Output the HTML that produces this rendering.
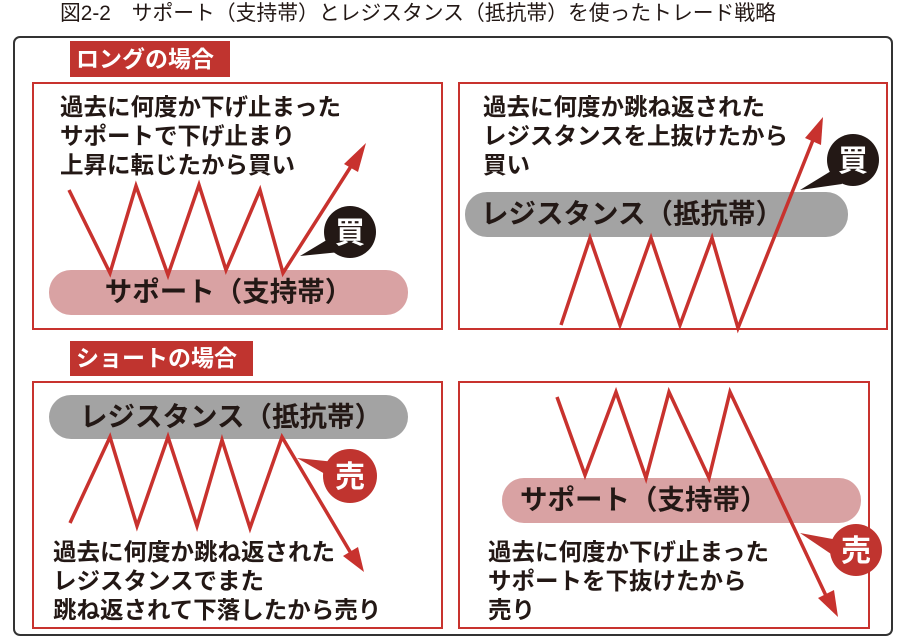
<!DOCTYPE html>
<html><head><meta charset="utf-8"><style>
body{margin:0;width:906px;height:643px;background:#fff;position:relative;overflow:hidden;font-family:"Liberation Sans","Noto Sans CJK JP",sans-serif;color:#231815}
.a{position:absolute}
.t{font-weight:bold;font-size:23.5px;line-height:29px;white-space:nowrap;letter-spacing:0px}
.lab{background:#c0342f;color:#fff;font-weight:bold;font-size:23px;line-height:36px;padding-left:6px;white-space:nowrap}
.p{border:2px solid #c8322e;box-sizing:border-box}
.pill{border-radius:22px;font-weight:bold;font-size:27.5px;line-height:44px;white-space:nowrap}
</style></head><body>
<div class="a" style="left:60px;top:1px;font-size:20.8px;line-height:26px;white-space:nowrap">図2-2　サポート（支持帯）とレジスタンス（抵抗帯）を使ったトレード戦略</div>
<div class="a" style="left:13px;top:36px;width:880px;height:600px;border:2px solid #333;border-radius:7px;box-sizing:border-box"></div>
<div class="a lab" style="left:70px;top:41px;width:154px;height:36px">ロングの場合</div>
<div class="a lab" style="left:70px;top:341px;width:177px;height:35px;line-height:35px">ショートの場合</div>
<div class="a p" style="left:32px;top:82px;width:411px;height:248px"></div>
<div class="a p" style="left:458px;top:82px;width:430px;height:248px"></div>
<div class="a p" style="left:32px;top:381px;width:411px;height:248px"></div>
<div class="a p" style="left:458px;top:381px;width:412px;height:248px"></div>
<div class="a pill" style="left:49px;top:270px;width:359px;height:45px;background:#d9a2a3;text-align:center">サポート（支持帯）</div>
<div class="a pill" style="left:465px;top:192px;width:383px;height:45px;background:#a3a3a3;padding-left:16px;box-sizing:border-box">レジスタンス（抵抗帯）</div>
<div class="a pill" style="left:49px;top:395px;width:359px;height:44px;background:#a3a3a3;padding-left:31px;box-sizing:border-box">レジスタンス（抵抗帯）</div>
<div class="a pill" style="left:502px;top:478px;width:359px;height:45px;background:#d9a2a3;padding-left:18px;box-sizing:border-box">サポート（支持帯）</div>
<svg class="a" style="left:0;top:0" width="906" height="643">
<g fill="none" stroke="#c8322e" stroke-width="3.5" stroke-linejoin="miter">
<polyline points="69,190 110,273 136,186 168,275 199,185 226,270 260,190 283,273 355,160"/>
<polyline points="561,325 590,238 620,325 651,238 680,325 712,238 738,328 815,135"/>
<polyline points="70,523 110,437 137,526 168,437 197,526 222,440 250,528 282,437 352,555"/>
<polyline points="557,397 585,475 616,392 646,478 669,392 709,478 730,392 828,600"/>
</g>
<g fill="#c8322e">
<polygon points="366,143 344,164 358,172"/>
<polygon points="823,117 805,138 821,145"/>
<polygon points="364,572 343,556 358,547"/>
<polygon points="838,617 818,598 834,590"/>
</g>
<polygon points="300,256 335,235 340,252" fill="#231815"/>
<circle cx="350" cy="232" r="26" fill="#231815"/>
<polygon points="800,190 836,168 842,184" fill="#231815"/>
<circle cx="853" cy="160" r="26" fill="#231815"/>
<polygon points="297,458 335,462 332,478" fill="#c0342f"/>
<circle cx="350" cy="476" r="27" fill="#c0342f"/>
<polygon points="800,533 838,540 834,556" fill="#c0342f"/>
<circle cx="856" cy="550" r="26" fill="#c0342f"/>
<g font-family="Liberation Sans,Noto Sans CJK JP,sans-serif" font-weight="bold" font-size="30" fill="#fff" text-anchor="middle">
<text x="350" y="243">買</text><text x="853" y="171">買</text><text x="350" y="487">売</text><text x="856" y="561">売</text>
</g>
</svg>
<div class="a t" style="left:60px;top:93px">過去に何度か下げ止まった<br>サポートで下げ止まり<br>上昇に転じたから買い</div>
<div class="a t" style="left:483px;top:93px">過去に何度か跳ね返された<br>レジスタンスを上抜けたから<br>買い</div>
<div class="a t" style="left:53px;top:538px">過去に何度か跳ね返された<br>レジスタンスでまた<br>跳ね返されて下落したから売り</div>
<div class="a t" style="left:488px;top:538px">過去に何度か下げ止まった<br>サポートを下抜けたから<br>売り</div>
</body></html>
